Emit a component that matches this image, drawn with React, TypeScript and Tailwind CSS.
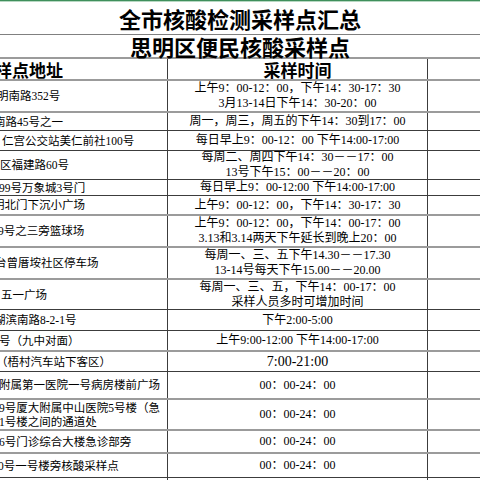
import React from "react";

type Row = {
  h: string;
  b: string;
  addr: string[];
  ml: string;
  time: string[];
  big?: boolean;
};

const thick = "border-b-2 border-[#9b9b9b]";
const thin = "border-b border-[#3c3c3c]";

const rows: Row[] = [
  { h: "h-[32px]", b: thick, addr: ["明南路352号"], ml: "ml-[-3px]", time: ["上午9：00-12：00，下午14：30-17：30", "3月13-14日下午14：30-20：00"] },
  { h: "h-[18px]", b: thin, addr: ["南路45号之一"], ml: "ml-[-6px]", time: ["周一，周三，周五的下午14：30到17：00"] },
  { h: "h-[20px]", b: thin, addr: ["仁宫公交站美仁前社100号"], ml: "ml-[2px]", time: ["每日早上9：00-12：00 下午14:00-17:00"] },
  { h: "h-[29px]", b: thin, addr: ["区福建路60号"], ml: "ml-[0px]", time: ["每周二、周四下午14：30－－17：00", "13号下午15：00－－20：00"] },
  { h: "h-[16px]", b: thin, addr: ["99号万象城3号门"], ml: "ml-[-1px]", time: ["每日早上9：00-12:00 下午14:00-17:00"] },
  { h: "h-[20px]", b: thick, addr: ["明北门下沉小广场"], ml: "ml-[-7px]", time: ["上午9：00-12：00，下午14：30-17：30"] },
  { h: "h-[32px]", b: thick, addr: ["9号之三旁篮球场"], ml: "ml-[-2px]", time: ["上午9：00-12：00，下午14：00-17：00", "3.13和3.14两天下午延长到晚上20：00"] },
  { h: "h-[32px]", b: thick, addr: ["台曾厝垵社区停车场"], ml: "ml-[-5px]", time: ["每周一、三、五下午14.30－－17.30", "13-14号每天下午15.00－－20.00"] },
  { h: "h-[30px]", b: thin, addr: ["五一广场"], ml: "ml-[1px]", time: ["每周一、三、五，下午14：00-17：00", "采样人员多时可增加时间"] },
  { h: "h-[21px]", b: thin, addr: ["湖滨南路8-2-1号"], ml: "ml-[-6px]", time: ["下午2:00-5:00"] },
  { h: "h-[21px]", b: thick, addr: ["号（九中对面）"], ml: "ml-[-1px]", time: ["上午9:00-12:00 下午14:00-17:00"] },
  { h: "h-[20px]", b: thin, addr: ["（梧村汽车站下客区）"], ml: "ml-[-4px]", time: ["7:00-21:00"], big: true },
  { h: "h-[28px]", b: thick, addr: ["附属第一医院一号病房楼前广场"], ml: "ml-[-1px]", time: ["00：00-24：00"] },
  { h: "h-[31px]", b: thick, addr: ["9号厦大附属中山医院5号楼（急", "1号楼之间的通道处"], ml: "ml-[-1px]", time: ["00：00-24：00"] },
  { h: "h-[23px]", b: thick, addr: ["6号门诊综合大楼急诊部旁"], ml: "ml-[-1px]", time: ["00：00-24：00"] },
  { h: "h-[24px]", b: thin, addr: ["0号一号楼旁核酸采样点"], ml: "ml-[-2px]", time: ["00：00-24：00"] },
  { h: "h-[24px]", b: thin, addr: [""], ml: "ml-[0px]", time: [""] },
];

const body = { fontFamily: '"Liberation Serif", "Noto Sans CJK SC", serif' };
const cjk = { fontFamily: '"Noto Sans CJK SC", "Liberation Serif", sans-serif' };

export default function App() {
  return (
    <div className="w-[480px] h-[480px] overflow-hidden bg-white text-black">
      <div className="h-[1px] bg-[#3f8f5c]" />
      <div className="h-[1px] bg-[#b7d8c2]" />
      <div
        className="h-[33px] border-b border-[#808080] flex items-center justify-center text-[22px] font-semibold leading-none"
        style={cjk}
      >
        全市核酸检测采样点汇总
      </div>
      <div
        className="h-[24px] border-b-2 border-[#9b9b9b] flex items-center justify-center text-[22px] font-semibold leading-none"
        style={cjk}
      >
        思明区便民核酸采样点
      </div>
      <div className="h-[22px] border-b-2 border-[#9b9b9b] flex" style={cjk}>
        <div className="w-[168px] border-r border-[#3c3c3c] overflow-hidden flex items-center">
          <span className="ml-[-5px] whitespace-nowrap text-[17px] font-bold leading-none">样点地址</span>
        </div>
        <div className="w-[260px] border-r border-[#3c3c3c] flex items-center justify-center">
          <span className="text-[17px] font-bold leading-none">采样时间</span>
        </div>
        <div className="flex-1" />
      </div>
      {rows.map((r, i) => (
        <div key={i} className={`${r.h} ${r.b} flex`} style={body}>
          <div className="w-[168px] border-r border-[#3c3c3c] overflow-hidden flex flex-col justify-center">
            {r.addr.map((a, j) => (
              <span key={j} className={`${r.ml} whitespace-nowrap text-[11.5px] leading-[14px]`}>
                {a}
              </span>
            ))}
          </div>
          <div className="w-[260px] border-r border-[#3c3c3c] overflow-hidden flex flex-col justify-center items-center">
            {r.time.map((t, j) => (
              <span
                key={j}
                className={`whitespace-nowrap leading-[15px] ${r.big ? "text-[14px]" : "text-[12px]"}`}
              >
                {t}
              </span>
            ))}
          </div>
          <div className="flex-1" />
        </div>
      ))}
    </div>
  );
}
